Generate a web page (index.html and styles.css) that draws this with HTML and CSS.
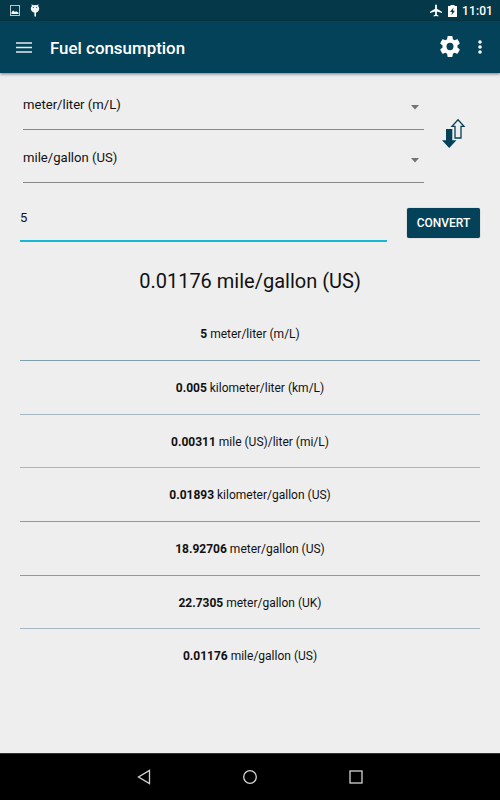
FILE: index.html
```
<!DOCTYPE html>
<html lang="en">
<head>
    <meta charset="UTF-8">
    <meta name="viewport" content="width=device-width, initial-scale=1.0">
    <title>Fuel consumption</title>
    <link rel="stylesheet" href="styles.css">
</head>
<body>
    <div class="status-bar">
        <svg class="status-picture" width="10" height="11" viewBox="0 0 10 11">
            <rect x="0.5" y="0.5" width="9" height="10" fill="none" stroke="#b9c8ce"/>
            <path d="M1.5 9V7.2L3.2 5.6L5 7L6.2 6.2L8.5 7.8V9z" fill="#fff"/>
        </svg>
        <svg class="status-debug" width="10" height="13" viewBox="0 0 10 13">
            <path d="M1.6 0L3 1.3Q5 .6 7 1.3L8.4 0L8.2 2.2Q9.2 3.2 9.2 4.6Q9.2 7.6 6 8.8V12.4H4.4V8.8Q.8 7.6.8 4.6Q.8 3.2 1.8 2.2z" fill="#f4f7f8"/>
            <circle cx="3.3" cy="3.6" r=".5" fill="#053848"/>
            <circle cx="6.7" cy="3.6" r=".5" fill="#053848"/>
        </svg>
        <svg class="status-plane" width="12" height="13" viewBox="2 1.5 20 21">
            <path d="M22 16v-2l-8.500-5V3.500a1.500 1.500 0 0 0-3 0V9L2 14v2l8.500-2.500V19L8 20.500V22l4-1 4 1v-1.500L13.500 19v-5.500z" fill="#fff"/>
        </svg>
        <svg class="status-battery" width="9" height="12" viewBox="0 0 9 12">
            <path d="M2.500 0h4v1H9v11H0V1h2.500z" fill="#fff"/>
            <path d="M5.600 2.500L2 7h2.200l-.800 3.300L7 5.800H4.900z" fill="#053848"/>
        </svg>
        <span class="clock">11:01</span>
    </div>

    <div class="toolbar">
        <svg class="menu-icon" width="16" height="11" viewBox="0 0 16 11">
            <path d="M0 1h16M0 5.500h16M0 10h16" stroke="#e3eaed" stroke-width="1.600"/>
        </svg>
        <h1>Fuel consumption</h1>
        <svg class="settings-icon" width="20" height="21" viewBox="2 2 20 20" preserveAspectRatio="none">
            <path d="M19.430 12.980c.040-.320.070-.640.070-.980s-.030-.660-.070-.980l2.110-1.650c.190-.150.240-.420.120-.640l-2-3.460c-.120-.220-.390-.300-.610-.220l-2.490 1c-.520-.400-1.080-.730-1.690-.980l-.380-2.650C14.460 2.180 14.250 2 14 2h-4c-.250 0-.460.180-.490.420l-.380 2.650c-.610.250-1.170.590-1.690.980l-2.490-1c-.230-.090-.490 0-.610.220l-2 3.460c-.130.220-.070.490.120.640l2.110 1.650c-.040.320-.070.650-.070.980s.030.660.070.980l-2.110 1.650c-.190.150-.240.420-.120.640l2 3.460c.120.220.390.300.610.220l2.490-1c.520.400 1.080.730 1.690.980l.380 2.650c.030.240.240.420.490.420h4c.250 0 .460-.180.490-.420l.380-2.650c.610-.250 1.170-.590 1.690-.980l2.490 1c.230.090.490 0 .610-.220l2-3.460c.120-.220.070-.490-.120-.640zM12 15.500a3.500 3.500 0 1 1 0-7 3.500 3.500 0 0 1 0 7z" fill="#fff"/>
        </svg>
        <svg class="more-icon" width="4" height="14" viewBox="0 0 4 14">
            <circle cx="2" cy="2" r="1.800" fill="#fff"/>
            <circle cx="2" cy="7" r="1.800" fill="#fff"/>
            <circle cx="2" cy="12" r="1.800" fill="#fff"/>
        </svg>
    </div>

    <div class="content">
        <div class="units">
            <div class="selects">
                <div class="select">
                    <span>meter/liter (m/L)</span>
                    <svg width="8" height="5" viewBox="0 0 8 5"><path d="M0 0h8L4 4.500z" fill="#737373"/></svg>
                </div>
                <div class="select">
                    <span>mile/gallon (US)</span>
                    <svg width="8" height="5" viewBox="0 0 8 5"><path d="M0 0h8L4 4.500z" fill="#737373"/></svg>
                </div>
            </div>
            <!-- swap the two units -->
            <svg class="swap" width="24" height="32" viewBox="0 0 24 32">
                <path d="M16 1.800L22 8.300H19V20H13V8.300H10z" fill="#eee" stroke="#044259" stroke-width="1.300"/>
                <path d="M4 11h6.300v11.200H14.500L7.200 30L0 22.200H4z" fill="#044259"/>
            </svg>
        </div>

        <div class="entry">
            <div class="amount">5</div>
            <div class="convert">CONVERT</div>
        </div>

        <div class="result">0.01176 mile/gallon (US)</div>

        <ul class="list">
            <li><b>5</b> meter/liter (m/L)</li>
            <li><b>0.005</b> kilometer/liter (km/L)</li>
            <li><b>0.00311</b> mile (US)/liter (mi/L)</li>
            <li><b>0.01893</b> kilometer/gallon (US)</li>
            <li><b>18.92706</b> meter/gallon (US)</li>
            <li><b>22.7305</b> meter/gallon (UK)</li>
            <li><b>0.01176</b> mile/gallon (US)</li>
        </ul>
    </div>

    <div class="nav-bar">
        <svg width="14" height="16" viewBox="0 0 14 16"><path d="M12.500 1.500v13L1.500 8z" fill="none" stroke="#d4d4d4" stroke-width="1.300"/></svg>
        <svg width="14" height="16" viewBox="0 0 14 16"><circle cx="7" cy="8" r="6.300" fill="none" stroke="#d4d4d4" stroke-width="1.300"/></svg>
        <svg width="14" height="16" viewBox="0 0 14 16"><rect x="1" y="2" width="12" height="12" fill="none" stroke="#d4d4d4" stroke-width="1.300"/></svg>
    </div>
</body>
</html>
```
FILE: styles.css
```
* {
    box-sizing: border-box;
}

body {
    font-family: Roboto, sans-serif;
    margin: 0;
    height: 800px;
    display: flex;
    flex-direction: column;
    overflow: hidden;
    background-color: #eee;
    color: #111;
}

svg {
    display: block;
    flex-shrink: 0;
}

.status-bar {
    height: 21px;
    display: flex;
    align-items: center;
    padding: 0 7px 0 10px;
    background-color: #053848;
    color: #fff;
}

.status-debug {
    margin-left: 10px;
}

.status-plane {
    margin-left: auto;
}

.status-battery {
    margin-left: 6px;
}

.clock {
    margin-left: 5px;
    font-size: 12px;
    font-weight: 500;
    letter-spacing: 0.1px;
}

.toolbar {
    height: 52px;
    display: flex;
    align-items: center;
    padding: 1px 18px 0 16px;
    background-color: #044259;
    color: #fff;
    box-shadow: 0 1px 3px rgba(0, 0, 0, 0.5);
}

h1 {
    margin: 0 0 0 18px;
    font-size: 16.9px;
    font-weight: 500;
}

.settings-icon {
    margin: -2px 0 0 auto;
}

.more-icon {
    margin: -1px 0 0 18px;
}

.content {
    flex: 1;
    padding: 3px 20px 0;
}

.units {
    display: flex;
    padding-left: 3px;
}

.selects {
    width: 401px;
}

.select {
    height: 53px;
    display: flex;
    justify-content: space-between;
    align-items: center;
    padding: 3px 5px 0 0;
    border-bottom: 1px solid #858585;
    font-size: 13.1px;
}

.select:first-child {
    height: 54px;
}

.select svg {
    margin-top: 6px;
}

.swap {
    margin: 42px 0 0 18px;
}

.entry {
    display: flex;
    justify-content: space-between;
    align-items: flex-end;
    height: 59px;
}

.amount {
    width: 367px;
    height: 36px;
    padding-top: 4px;
    border-bottom: 2px solid #17b8d4;
    font-size: 13.1px;
}

.convert {
    width: 73px;
    height: 30px;
    margin-bottom: 4px;
    border-radius: 2px;
    background-color: #044259;
    color: #fff;
    font-size: 12px;
    font-weight: 500;
    line-height: 30px;
    text-align: center;
    box-shadow: 0 0 1px rgba(0, 0, 0, 0.5);
}

.result {
    height: 65.3px;
    padding-top: 26px;
    font-size: 20px;
    line-height: 26px;
    text-align: center;
}

.list {
    list-style: none;
    margin: 0;
    padding: 0;
    font-size: 12px;
    text-align: center;
}

.list li {
    height: 53.65px;
    border-bottom: 1px solid #809eac;
    line-height: 54.8px;
}

/* softer dividers */
.list li:nth-child(2),
.list li:nth-child(3),
.list li:nth-child(6) {
    border-bottom-color: #a4b6c0;
}

.list li:last-child {
    border-bottom: none;
}

.nav-bar {
    height: 47px;
    display: flex;
    justify-content: center;
    align-items: center;
    gap: 92px;
    background-color: #000;
    border-top: 1px solid #333;
}
```
